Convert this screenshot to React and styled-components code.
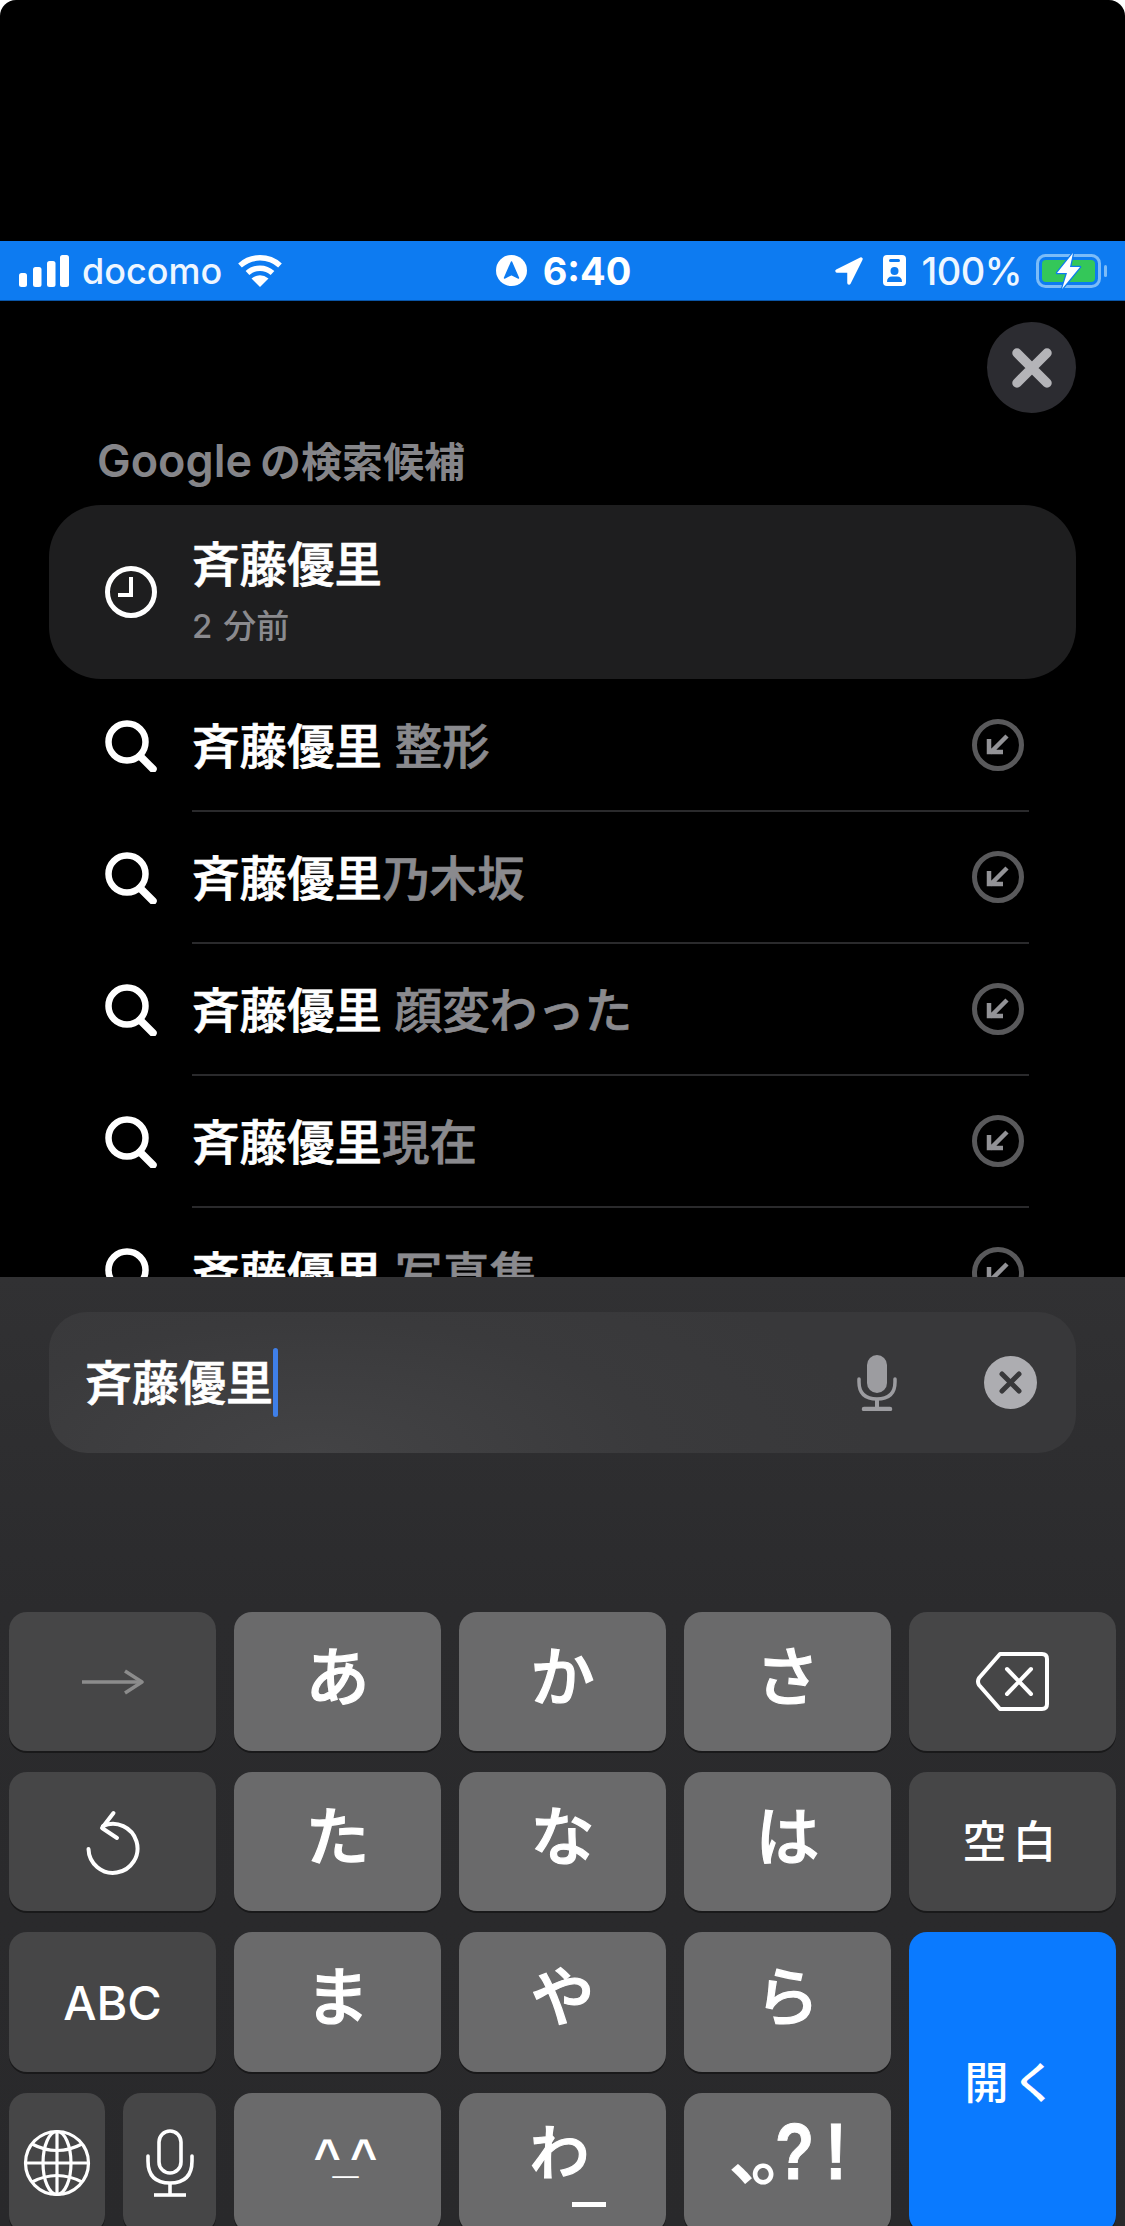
import React from 'react';
import styled, { createGlobalStyle } from 'styled-components';

const CJK = `Inter, "Noto Sans CJK JP", sans-serif`;

const GlobalStyle = createGlobalStyle`
  html, body {
    margin: 0;
    padding: 0;
    background: #ffffff;
  }
  * {
    box-sizing: border-box;
  }
`;

const Screen = styled.div`
  width: 1125px;
  height: 2226px;
  display: flex;
  flex-direction: column;
  overflow: hidden;
  background: #000000;
  border-radius: 16px 16px 0 0;
  font-family: ${CJK};
  color: #ffffff;
`;

const TopSpace = styled.div`
  height: 241px;
  flex: none;
`;

const StatusBar = styled.div`
  height: 60px;
  flex: none;
  display: grid;
  grid-template-columns: 1fr auto 1fr;
  align-items: center;
  padding: 0 17px 0 19px;
  background: #0d7bf1;
  border-bottom: 1px solid #0a56a8;
`;

const StatusGroup = styled.div`
  display: flex;
  align-items: center;
  justify-content: ${props => props.$end ? 'flex-end' : 'flex-start'};
`;

const Carrier = styled.span`
  font-size: 36px;
  font-weight: 500;
  line-height: 1;
  margin: 0 15px 0 13px;
  color: #eef6ff;
`;

const Clock = styled.span`
  font-size: 38px;
  font-weight: 700;
  line-height: 1;
  margin-left: 16px;
`;

const Percent = styled.span`
  font-size: 38px;
  font-weight: 500;
  line-height: 1;
  letter-spacing: -0.5px;
  margin: 0 14px 0 15px;
  color: #eef6ff;
`;

const BadgeGap = styled.span`
  width: 19px;
`;

const Results = styled.div`
  flex: 1;
  min-height: 0;
  overflow: hidden;
  padding: 21px 49px 0;
`;

const CloseRow = styled.div`
  display: flex;
  justify-content: flex-end;
`;

const CloseButton = styled.div`
  width: 89px;
  height: 91px;
  border-radius: 50%;
  background: #2c2c31;
  display: flex;
  align-items: center;
  justify-content: center;
`;

const SectionLabel = styled.div`
  height: 92px;
  padding: 22px 0 0 48px;
  display: flex;
  align-items: baseline;
  font-size: 41px;
  line-height: 52px;
  font-weight: 700;
  color: #858589;
`;

const LabelBrand = styled.span`
  font-size: 45px;
  font-weight: 600;
  margin-right: 8px;
`;

const RecentCard = styled.div`
  height: 174px;
  margin-bottom: 1px;
  display: flex;
  align-items: center;
  border-radius: 52px;
  background: #1e1e1f;
`;

const IconCell = styled.div`
  width: 143px;
  flex: none;
  padding-left: 20px;
  display: flex;
  align-items: center;
  justify-content: center;
`;

const RecentText = styled.div`
  display: flex;
  flex-direction: column;
  gap: 9px;
  margin-top: -2px;
`;

const Query = styled.span`
  font-size: 47.5px;
  line-height: 60px;
  font-weight: 500;
  color: #ffffff;
  white-space: pre;
  -webkit-text-stroke: 0.7px currentColor;
`;

const RowQuery = styled(Query)`
  padding-top: 3px;
`;

const Suffix = styled.span`
  color: #8a8a8e;
`;

const TimeAgo = styled.span`
  font-size: 33px;
  line-height: 44px;
  font-weight: 500;
  word-spacing: 2px;
  color: #8a8a8e;
`;

const SuggestionRow = styled.div`
  height: 132px;
  display: flex;
  align-items: center;
`;

const RowBody = styled.div`
  flex: 1;
  height: 100%;
  margin-right: 47px;
  padding-right: 5px;
  display: flex;
  align-items: center;
  justify-content: space-between;
  border-bottom: 2px solid #2a2a2c;
`;

const Panel = styled.div`
  height: 949px;
  flex: none;
  padding-top: 35px;
  background: linear-gradient(180deg, #313133 0%, #2b2b2d 35%, #29292b 100%);
`;

const SearchField = styled.div`
  height: 141px;
  margin: 0 49px;
  padding: 0 39px 0 36px;
  display: flex;
  align-items: center;
  border-radius: 38px;
  background: radial-gradient(ellipse 560px 220px at 26% 100%, #434345 0%, #3a3a3c 60%, #38383a 100%);
`;

const FieldText = styled.span`
  font-size: 47px;
  line-height: 60px;
  font-weight: 500;
  -webkit-text-stroke: 0.7px currentColor;
`;

const Caret = styled.span`
  width: 5px;
  height: 69px;
  margin-right: auto;
  border-radius: 3px;
  background: #3f7fe8;
`;

const MicSlot = styled.div`
  margin-right: 87px;
  display: flex;
`;

const KeyGrid = styled.div`
  margin-top: 159px;
  padding-left: 9px;
  display: grid;
  grid-template-columns: repeat(5, 207px);
  grid-template-rows: 139px 139px 140px 140px;
  column-gap: 18px;
  row-gap: 21px;
`;

const toneColors = {
  char: '#6a6a6b',
  func: '#464647',
  go: '#0a7aff',
};

const Key = styled.div`
  display: flex;
  align-items: center;
  justify-content: center;
  border-radius: 18px;
  background: ${props => toneColors[props.$tone || 'char']};
  box-shadow: 0 2px 0 #19191a;
  grid-row: ${props => props.$tall ? 'span 2' : 'auto'};
  color: #ffffff;
  font-weight: 500;
  line-height: 1;
`;

const Kana = styled.span`
  font-size: 64px;
  line-height: 1;
  font-weight: 500;
  margin-bottom: 10px;
  -webkit-text-stroke: 1.2px currentColor;
`;

const KeyLabel = styled.span`
  font-size: ${props => props.$size || 44}px;
  letter-spacing: ${props => props.$spacing || 0}px;
  font-weight: 500;
`;

const SplitKeys = styled.div`
  display: flex;
  gap: 18px;
`;

const GlobeKey = styled(Key)`
  width: 96px;
`;

const MicKey = styled(Key)`
  width: 93px;
`;

const Face = styled.span`
  font-family: "Liberation Sans", sans-serif;
  font-size: 46px;
  font-weight: 700;
  letter-spacing: -8px;
  margin: 0 -8px 14px 0;
`;

const WaKey = styled.span`
  display: flex;
  align-items: flex-end;
  margin: 0 0 20px 10px;
  font-size: 60px;
  font-weight: 500;
  -webkit-text-stroke: 1.2px currentColor;
`;

const WaLine = styled.span`
  width: 34px;
  height: 5px;
  margin: 0 0 -24px -18px;
  background: #ffffff;
`;

const PunctKey = styled.span`
  display: flex;
  align-items: baseline;
  margin-bottom: 22px;
`;

const Marks = styled.span`
  font-family: "Noto Sans CJK JP", sans-serif;
  font-size: 64px;
  line-height: 1;
  letter-spacing: -10px;
  margin-right: -30px;
  font-weight: 700;
`;

const Bang = styled.span`
  display: inline-block;
  font-family: "Liberation Sans", sans-serif;
  font-size: 80px;
  font-weight: 700;
  line-height: 1;
  letter-spacing: 14px;
  margin-right: -32px;
  transform: scaleX(0.8);
  transform-origin: left center;
  -webkit-text-stroke: 1px currentColor;
`;

function SignalIcon() {
  return (
    <svg width="50" height="32" viewBox="0 0 50 32" fill="#ffffff">
      <rect x="0" y="18" width="8" height="14" rx="2.5" />
      <rect x="14" y="12" width="8.5" height="20" rx="2.5" />
      <rect x="28" y="6" width="8.5" height="26" rx="2.5" />
      <rect x="41" y="0" width="9" height="32" rx="2.5" />
    </svg>
  );
}

function WifiIcon() {
  return (
    <svg width="46" height="33" viewBox="0 0 46 33" fill="none" stroke="#ffffff" strokeWidth="5.5">
      <path d="M3 11.5 A30 30 0 0 1 43 11.5" />
      <path d="M10.5 19 A18.5 18.5 0 0 1 35.5 19" />
      <path d="M23 33 L14.5 24.5 Q23 18 31.5 24.5 Z" fill="#ffffff" stroke="none" />
    </svg>
  );
}

function NavBadge() {
  return (
    <svg width="31" height="31" viewBox="0 0 31 31">
      <circle cx="15.5" cy="15.5" r="15.5" fill="#ffffff" />
      <path d="M15.5 7 L22.5 23 L15.5 19.5 L8.5 23 Z" fill="#0d7bf1" stroke="#0d7bf1" strokeWidth="1.5" strokeLinejoin="round" />
    </svg>
  );
}

function LocationIcon() {
  return (
    <svg width="30" height="30" viewBox="0 0 30 30">
      <path d="M27 3 L3 15 L15 15 L15 27 Z" fill="#ffffff" stroke="#ffffff" strokeWidth="3.5" strokeLinejoin="round" />
    </svg>
  );
}

function IdBadgeIcon() {
  return (
    <svg width="23" height="31" viewBox="0 0 23 31">
      <rect width="23" height="31" rx="4" fill="#ffffff" />
      <rect x="6" y="4" width="11" height="3" rx="1.5" fill="#0d7bf1" />
      <circle cx="11.5" cy="16" r="4" fill="#0d7bf1" />
      <path d="M4 27 Q4 21.5 9 21.5 L14 21.5 Q19 21.5 19 27 Z" fill="#0d7bf1" />
    </svg>
  );
}

function BatteryIcon() {
  return (
    <svg width="72" height="36" viewBox="0 0 72 36">
      <rect x="1.5" y="2.5" width="62" height="31" rx="8" fill="none" stroke="#7cbcf8" strokeWidth="3" />
      <rect x="6" y="7" width="53" height="22" rx="4" fill="#34c759" />
      <rect x="68" y="12" width="3" height="12" rx="1.5" fill="#7cbcf8" />
      <path d="M37 0 L21 20 L31 20 L26 36 L44 14 L34 14 Z" fill="#ffffff" stroke="#0d7bf1" strokeWidth="2.5" strokeLinejoin="round" paintOrder="stroke" />
    </svg>
  );
}

function CloseIcon() {
  return (
    <svg width="42" height="42" viewBox="0 0 42 42" fill="none" stroke="#b4b4b8" strokeWidth="9.5" strokeLinecap="round">
      <path d="M6 6 L36 36 M36 6 L6 36" />
    </svg>
  );
}

function ClockIcon() {
  return (
    <svg width="52" height="52" viewBox="0 0 52 52" fill="none" stroke="#ffffff">
      <circle cx="26" cy="26" r="23.5" strokeWidth="5" />
      <path d="M26 11 L26 29 L13 29" strokeWidth="4" strokeLinejoin="miter" />
    </svg>
  );
}

function SearchIcon() {
  return (
    <svg width="52" height="52" viewBox="0 0 52 52" fill="none" stroke="#ffffff" strokeLinecap="round">
      <circle cx="22" cy="22" r="18.5" strokeWidth="6.5" />
      <path d="M35 36 L48 49" strokeWidth="7.5" />
    </svg>
  );
}

function FillArrowIcon() {
  return (
    <svg width="52" height="52" viewBox="0 0 52 52" fill="none">
      <circle cx="26" cy="26" r="23.5" stroke="#59595b" strokeWidth="5" />
      <path d="M35 17 L18 34 M17 20 L17 33 L31 33" stroke="#929296" strokeWidth="4.5" />
    </svg>
  );
}

function FieldMicIcon() {
  return (
    <svg width="40" height="56" viewBox="0 0 40 56" fill="none" stroke="#9c9ca0">
      <rect x="10" y="0" width="20" height="38" rx="10" fill="#9c9ca0" stroke="none" />
      <path d="M2 24 L2 27 Q2 44 20 44 Q38 44 38 27 L38 24" strokeWidth="3.5" strokeLinecap="round" />
      <path d="M20 44 L20 53" strokeWidth="4" />
      <path d="M7 54 L33 54" strokeWidth="4.5" strokeLinecap="round" />
    </svg>
  );
}

function ClearIcon() {
  return (
    <svg width="53" height="53" viewBox="0 0 53 53" fill="none">
      <circle cx="26.5" cy="26.5" r="26.5" fill="#adadb1" />
      <path d="M18 18 L35 35 M35 18 L18 35" stroke="#38383a" strokeWidth="5" strokeLinecap="round" />
    </svg>
  );
}

function NextArrowIcon() {
  return (
    <svg width="62" height="26" viewBox="0 0 62 26" fill="none" stroke="#8c8c8c" strokeWidth="3.5">
      <path d="M0 13 L59 13" />
      <path d="M43 2 L60 13 L43 24" strokeLinejoin="round" />
    </svg>
  );
}

function BackspaceIcon() {
  return (
    <svg width="74" height="61" viewBox="0 0 74 61" fill="none" stroke="#ffffff" strokeLinejoin="round" strokeLinecap="round">
      <path d="M24 3 L66 3 Q71 3 71 8 L71 53 Q71 58 66 58 L24 58 L3 34 Q1 30.500 3 27 Z" strokeWidth="4" />
      <path d="M31 18 L55 43 M55 18 L31 43" strokeWidth="4" />
    </svg>
  );
}

function UndoIcon() {
  return (
    <svg width="56" height="66" viewBox="-28 -38 56 66" fill="none" stroke="#ffffff" strokeWidth="4" strokeLinecap="round" strokeLinejoin="round">
      <path d="M-10 -21 A24.500 24.500 0 1 1 -24.500 2" />
      <path d="M0.500 -34 L-11 -19 L4 -9" />
    </svg>
  );
}

function GlobeIcon() {
  return (
    <svg width="68" height="68" viewBox="0 0 68 68" fill="none" stroke="#ffffff" strokeWidth="3.2">
      <circle cx="34" cy="34" r="31.5" />
      <ellipse cx="34" cy="34" rx="14" ry="31.5" />
      <path d="M34 2.500 L34 65.500 M2.500 34 L65.500 34" />
      <path d="M9 15 Q34 28 59 15 M9 53 Q34 40 59 53" />
    </svg>
  );
}

function KeyMicIcon() {
  return (
    <svg width="48" height="68" viewBox="0 0 48 68" fill="none" stroke="#ffffff" strokeWidth="3.6">
      <rect x="13" y="2" width="22" height="42" rx="11" />
      <path d="M2 27 L2 32 Q2 54 24 54 Q46 54 46 32 L46 27" strokeLinecap="round" />
      <path d="M24 54 L24 65" />
      <path d="M8 66 L40 66" />
    </svg>
  );
}

const suggestions = [
  ['斉藤優里', ' 整形'],
  ['斉藤優里', '乃木坂'],
  ['斉藤優里', ' 顔変わった'],
  ['斉藤優里', '現在'],
  ['斉藤優里', ' 写真集'],
];

function App() {
  return (
    <Screen>
      <GlobalStyle />
      <TopSpace />

      <StatusBar>
        <StatusGroup>
          <SignalIcon />
          <Carrier>docomo</Carrier>
          <WifiIcon />
        </StatusGroup>
        <StatusGroup>
          <NavBadge />
          <Clock>6:40</Clock>
        </StatusGroup>
        <StatusGroup $end>
          <LocationIcon />
          <BadgeGap />
          <IdBadgeIcon />
          <Percent>100%</Percent>
          <BatteryIcon />
        </StatusGroup>
      </StatusBar>

      <Results>
        <CloseRow>
          <CloseButton><CloseIcon /></CloseButton>
        </CloseRow>
        <SectionLabel><LabelBrand>Google</LabelBrand>の検索候補</SectionLabel>
        <RecentCard>
          <IconCell><ClockIcon /></IconCell>
          <RecentText>
            <Query>斉藤優里</Query>
            <TimeAgo>2 分前</TimeAgo>
          </RecentText>
        </RecentCard>
        {suggestions.map(([main, rest]) => (
          <SuggestionRow key={rest}>
            <IconCell><SearchIcon /></IconCell>
            <RowBody>
              <RowQuery>{main}<Suffix>{rest}</Suffix></RowQuery>
              <FillArrowIcon />
            </RowBody>
          </SuggestionRow>
        ))}
      </Results>

      <Panel>
        <SearchField>
          <FieldText>斉藤優里</FieldText>
          <Caret />
          <MicSlot><FieldMicIcon /></MicSlot>
          <ClearIcon />
        </SearchField>

        <KeyGrid>
          <Key $tone="func"><NextArrowIcon /></Key>
          <Key><Kana>あ</Kana></Key>
          <Key><Kana>か</Kana></Key>
          <Key><Kana>さ</Kana></Key>
          <Key $tone="func"><BackspaceIcon /></Key>

          <Key $tone="func"><UndoIcon /></Key>
          <Key><Kana>た</Kana></Key>
          <Key><Kana>な</Kana></Key>
          <Key><Kana>は</Kana></Key>
          <Key $tone="func"><KeyLabel $spacing={6}>空白</KeyLabel></Key>

          <Key $tone="func"><KeyLabel $size={47}>ABC</KeyLabel></Key>
          <Key><Kana>ま</Kana></Key>
          <Key><Kana>や</Kana></Key>
          <Key><Kana>ら</Kana></Key>
          <Key $tone="go" $tall><KeyLabel $spacing={4}>開く</KeyLabel></Key>

          <SplitKeys>
            <GlobeKey $tone="func"><GlobeIcon /></GlobeKey>
            <MicKey $tone="func"><KeyMicIcon /></MicKey>
          </SplitKeys>
          <Key><Face>^_^</Face></Key>
          <Key>
            <WaKey>わ<WaLine /></WaKey>
          </Key>
          <Key>
            <PunctKey><Marks>、。</Marks><Bang>?!</Bang></PunctKey>
          </Key>
        </KeyGrid>
      </Panel>
    </Screen>
  );
}

export default App;
